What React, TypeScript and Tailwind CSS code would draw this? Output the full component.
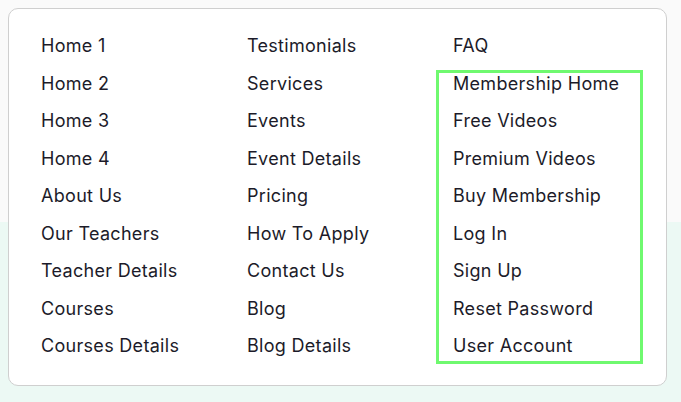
import React from "react";

const cols = [
  ["Home 1", "Home 2", "Home 3", "Home 4", "About Us", "Our Teachers", "Teacher Details", "Courses", "Courses Details"],
  ["Testimonials", "Services", "Events", "Event Details", "Pricing", "How To Apply", "Contact Us", "Blog", "Blog Details"],
  ["FAQ", "Membership Home", "Free Videos", "Premium Videos", "Buy Membership", "Log In", "Sign Up", "Reset Password", "User Account"],
];

export default function App() {
  return (
    <div className="relative w-[681px] h-[402px] overflow-hidden bg-[#fafafa]" style={{ fontFamily: "Inter, 'Noto Sans', sans-serif" }}>
      <div className="absolute left-0 right-0 top-[222px] bottom-0 bg-[#ecf9f4]" />
      <div className="relative ml-[8px] mt-[8px] w-[659px] h-[378px] bg-white border border-[#cfcfcf] rounded-[10px] pl-[32px] pt-[18px] grid grid-cols-[206px_206px_206px]">
        {cols.map((c, i) => (
          <div key={i} className="flex flex-col">
            {c.map((t) => (
              <div key={t} className="text-[18px] leading-[37.5px] tracking-[0.3px] text-[#1c1b29] whitespace-nowrap">{t}</div>
            ))}
          </div>
        ))}
      </div>
      <div className="absolute left-[436px] top-[70px] w-[207px] h-[294px] border-[3px] border-[#6ff96f]" />
    </div>
  );
}
